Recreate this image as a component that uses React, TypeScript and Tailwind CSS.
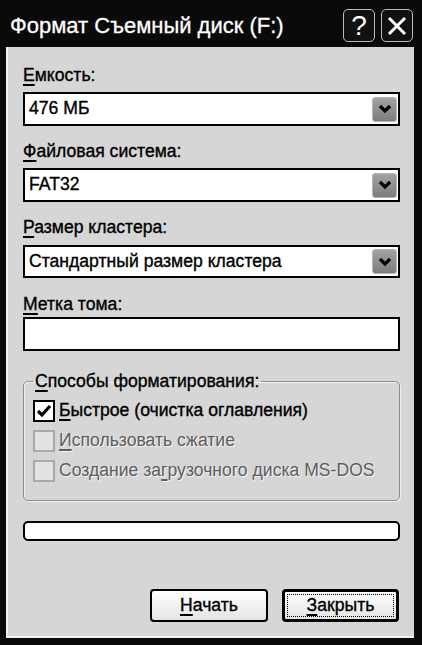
import React from 'react';

const font = { fontFamily: '"Liberation Sans", Arial, sans-serif' };

function Key({ children }: { children: React.ReactNode }) {
  return <span className="underline decoration-[1.5px] underline-offset-[3px]">{children}</span>;
}

function Label({ k, rest, className = '' }: { k: string; rest: string; className?: string }) {
  return (
    <div className={`h-[22px] leading-[22px] text-[17.6px] text-black [-webkit-text-stroke:0.35px_#000] ${className}`}>
      <Key>{k}</Key>
      {rest}
    </div>
  );
}

function Combo({ value, className = '' }: { value: string; className?: string }) {
  return (
    <div className={`h-[34px] border-2 border-black bg-white flex items-center justify-between pl-[4px] pr-[1px] ${className}`}>
      <span className="text-[17.6px] leading-none text-black [-webkit-text-stroke:0.35px_#000]">{value}</span>
      <div className="w-[25px] h-[25px] rounded-[3px] border border-[#b5b5b5] bg-gradient-to-b from-[#a3a3a3] to-[#7d7d7d] flex items-center justify-center">
        <svg width="14" height="10" viewBox="0 0 14 10">
          <polyline points="2,2 7,7 12,2" fill="none" stroke="#000" strokeWidth="3.2" strokeLinejoin="miter" />
        </svg>
      </div>
    </div>
  );
}

function Check({ checked, disabled, children }: { checked?: boolean; disabled?: boolean; children: React.ReactNode }) {
  return (
    <div className="h-[30px] flex items-center">
      <div
        className={`w-[22px] h-[22px] border-2 flex items-center justify-center ${
          disabled ? 'border-[#a9a9a9] bg-[#e2e2e2]' : 'border-black bg-white'
        }`}
      >
        {checked && (
          <svg width="16" height="14" viewBox="0 0 16 14">
            <polyline points="2,7 6,11 14,2" fill="none" stroke="#000" strokeWidth="3.2" />
          </svg>
        )}
      </div>
      <span
        className={`ml-[4px] text-[17.6px] leading-none ${
          disabled
            ? 'text-[#5e5e5e] [text-shadow:1px_1px_0_#f4f4f4]'
            : 'text-black [-webkit-text-stroke:0.35px_#000]'
        }`}
      >
        {children}
      </span>
    </div>
  );
}

export default function App() {
  return (
    <div className="w-[422px] h-[645px] bg-[#0a0a0a] flex flex-col" style={font}>
      {/* Title bar */}
      <div className="h-[47px] flex items-start justify-between pl-[10px] pr-[9px]">
        <div className="mt-[13px] text-[22px] leading-[26px] text-white [-webkit-text-stroke:0.3px_#fff]">
          Формат Съемный диск (F:)
        </div>
        <div className="flex gap-[6px] mt-[9px]">
          <div className="w-[32px] h-[33px] rounded-[5px] border-[1.5px] border-[#bdbdbd] bg-[#111] flex items-center justify-center text-white text-[28px] leading-none">
            ?
          </div>
          <div className="w-[32px] h-[33px] rounded-[5px] border-[1.5px] border-[#bdbdbd] bg-[#111] flex items-center justify-center">
            <svg width="20" height="20" viewBox="0 0 20 20">
              <path d="M2 2 L18 18 M18 2 L2 18" stroke="#fff" strokeWidth="3" fill="none" />
            </svg>
          </div>
        </div>
      </div>

      {/* Body */}
      <div className="ml-[6px] mr-[8px] h-[591px] border-l-2 border-b-2 border-[#f2f2f2] bg-[#d6d6d6] pl-[15px] pr-[14px] flex flex-col">
        <Label k="Е" rest="мкость:" className="mt-[17px]" />
        <Combo value="476 МБ" className="mt-[6px]" />

        <Label k="Ф" rest="айловая система:" className="mt-[14px]" />
        <Combo value="FAT32" className="mt-[6px]" />

        <Label k="Р" rest="азмер кластера:" className="mt-[14px]" />
        <Combo value="Стандартный размер кластера" className="mt-[7px] !h-[33px]" />

        <Label k="М" rest="етка тома:" className="mt-[15px]" />
        <div className="mt-[2px] h-[34px] border-2 border-black bg-white" />

        <fieldset className="mt-[19px] border border-[#8c8c8c] rounded-[5px] px-[9px] pb-[14px] shadow-[inset_1px_1px_0_#f0f0f0,1px_1px_0_#f0f0f0]">
          <legend className="px-[2px] h-[22px] leading-[22px] text-[17.6px] text-black [-webkit-text-stroke:0.35px_#000]">
            <Key>С</Key>пособы форматирования:
          </legend>
          <div className="mt-[4px] flex flex-col">
            <Check checked>
              <Key>Б</Key>ыстрое (очистка оглавления)
            </Check>
            <Check disabled>
              <Key>И</Key>спользовать сжатие
            </Check>
            <Check disabled>
              Создание за<Key>г</Key>рузочного диска MS-DOS
            </Check>
          </div>
        </fieldset>

        <div className="mt-[20px] h-[20px] border-2 border-black rounded-[5px] bg-white" />

        <div className="mt-[48px] flex justify-end gap-[14px] pr-[1px]">
          <button className="w-[118px] h-[33px] rounded-[4px] border-2 border-black bg-gradient-to-b from-white to-[#e4e4e4] text-[17.6px] text-black leading-none [-webkit-text-stroke:0.35px_#000]">
            <Key>Н</Key>ачать
          </button>
          <button className="w-[117px] h-[33px] rounded-[4px] border-[3px] border-black bg-gradient-to-b from-white to-[#e4e4e4] p-[2px]">
            <span className="w-full h-full flex items-center justify-center border border-dotted border-black text-[17.6px] text-black leading-none [-webkit-text-stroke:0.35px_#000]">
              <Key>З</Key>акрыть
            </span>
          </button>
        </div>
      </div>
    </div>
  );
}
